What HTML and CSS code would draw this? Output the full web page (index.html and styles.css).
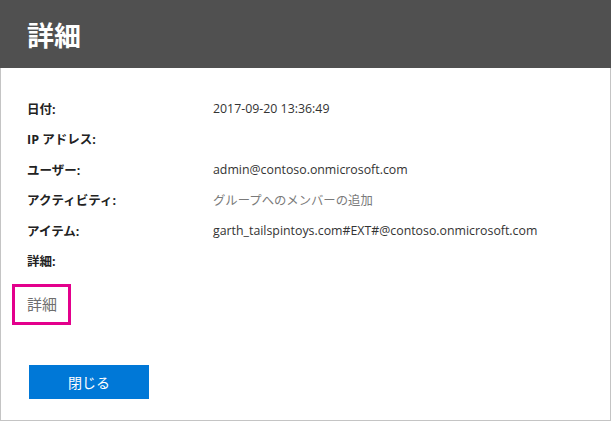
FILE: index.html
```html
<!DOCTYPE html>
<html lang="ja">
<head>
<meta charset="utf-8">
<link rel="stylesheet" href="styles.css">
</head>
<body>
<div class="panel">
  <header class="header"><h1 class="title">詳細</h1></header>
  <main class="content">
    <dl class="details">
      <dt>日付:</dt><dd>2017-09-20 13:36:49</dd>
      <dt>IP アドレス:</dt><dd></dd>
      <dt>ユーザー:</dt><dd>admin@contoso.onmicrosoft.com</dd>
      <dt>アクティビティ:</dt><dd class="muted">グループへのメンバーの追加</dd>
      <dt>アイテム:</dt><dd>garth_tailspintoys.com#EXT#@contoso.onmicrosoft.com</dd>
      <dt>詳細:</dt><dd></dd>
    </dl>
    <div class="highlight">詳細</div>
    <div class="actions"><button class="btn">閉じる</button></div>
  </main>
</div>
</body>
</html>
```
FILE: styles.css
```css
html, body {
  margin: 0;
  padding: 0;
  background: #fff;
}
body {
  font-family: "Open Sans", "Noto Sans CJK JP", sans-serif;
  color: #333;
}
.panel {
  width: 611px;
  height: 421px;
  box-sizing: border-box;
  border: 1px solid #c4c4c4;
  border-top: none;
  display: flex;
  flex-direction: column;
}
.header {
  background: #505050;
  height: 68px;
  display: flex;
  align-items: center;
  margin: 0 -1px 0 -1px;
  padding-left: 27px;
}
.title {
  margin: 0;
  color: #fff;
  font-size: 27px;
  font-weight: 700;
  font-family: "Noto Sans CJK JP", sans-serif;
  line-height: 1;
}
.content {
  padding: 25px 0 0 26px;
}
.details {
  margin: 0;
  display: grid;
  grid-template-columns: 186px 1fr;
  grid-auto-rows: 30.5px;
  align-items: center;
  font-size: 12.5px;
}
.details dt {
  font-weight: 700;
  color: #222;
}
.details dd {
  margin: 0;
  color: #333;
  font-size: 12.35px;
}
.details dd.muted {
  color: #7a7a7a;
}
.highlight {
  display: inline-block;
  margin: 8px 0 0 -15px;
  border: 3px solid #e3008c;
  padding: 0 11px 0 12px;
  height: 35px;
  line-height: 35px;
  font-size: 15px;
  color: #6e6e6e;
}
.actions {
  margin: 40px 0 0 2px;
}
.btn {
  width: 120px;
  height: 34px;
  border: none;
  background: #0078d7;
  color: #fff;
  font-family: "Noto Sans CJK JP", sans-serif;
  font-size: 14px;
  padding: 0;
}
```
